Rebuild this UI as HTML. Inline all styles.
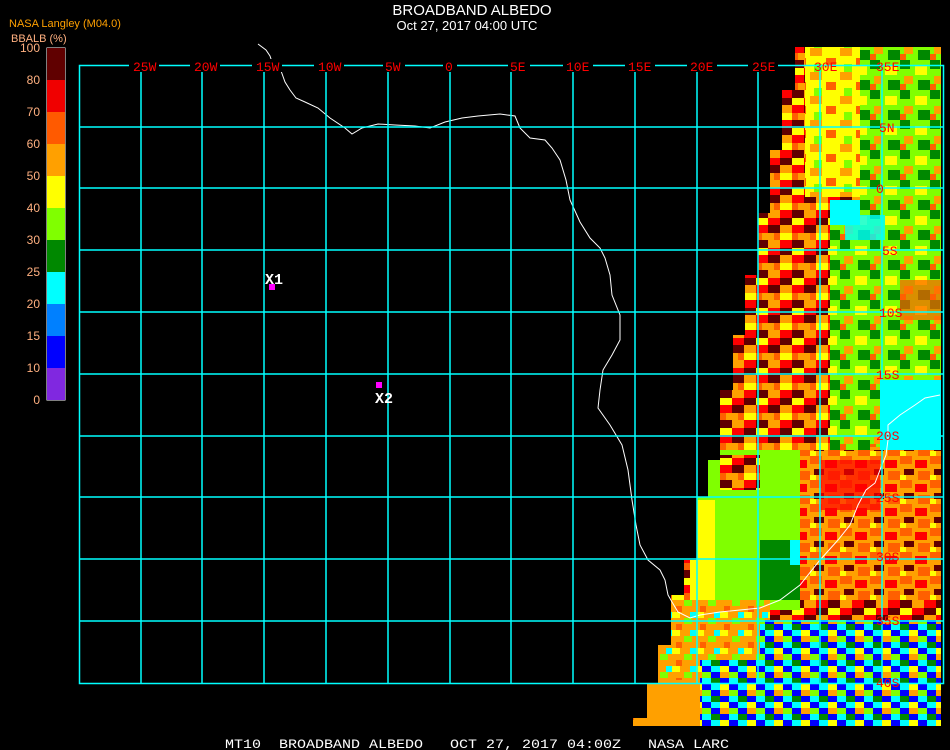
<!DOCTYPE html>
<html><head><meta charset="utf-8"><style>
html,body{margin:0;padding:0;background:#000;width:950px;height:750px;overflow:hidden}
svg{display:block}
text{font-family:"Liberation Sans",sans-serif}
.m{font-family:"Liberation Mono",monospace}
</style></head><body>
<svg width="950" height="750" viewBox="0 0 950 750" xmlns="http://www.w3.org/2000/svg">
<defs>
<pattern id="hot" width="36" height="30" patternUnits="userSpaceOnUse">
<rect width="36" height="30" fill="#ff6000"/>
<rect x="0" y="0" width="12" height="8" fill="#600000"/><rect x="12" y="0" width="12" height="8" fill="#ffa000"/><rect x="24" y="0" width="12" height="8" fill="#ff0000"/>
<rect x="0" y="8" width="12" height="7" fill="#ffff00"/><rect x="12" y="8" width="12" height="7" fill="#ff0000"/><rect x="24" y="8" width="12" height="7" fill="#600000"/>
<rect x="0" y="15" width="12" height="8" fill="#ff0000"/><rect x="12" y="15" width="12" height="8" fill="#600000"/><rect x="24" y="15" width="12" height="8" fill="#ffa000"/>
<rect x="6" y="23" width="12" height="7" fill="#ffa000"/><rect x="24" y="23" width="12" height="7" fill="#ffff00"/>
</pattern>
<pattern id="veg" width="30" height="30" patternUnits="userSpaceOnUse">
<rect width="30" height="30" fill="#80ff00"/>
<rect x="0" y="0" width="10" height="9" fill="#008800"/><rect x="15" y="6" width="12" height="9" fill="#ffff00"/>
<rect x="4" y="16" width="9" height="8" fill="#ffa000"/><rect x="18" y="20" width="12" height="10" fill="#008800"/>
<rect x="0" y="24" width="6" height="6" fill="#ff6000"/>
</pattern>
<pattern id="yel" width="30" height="24" patternUnits="userSpaceOnUse">
<rect width="30" height="24" fill="#ffff00"/>
<rect x="0" y="0" width="12" height="8" fill="#ffa000"/><rect x="16" y="10" width="10" height="8" fill="#ff6000"/>
<rect x="4" y="16" width="8" height="8" fill="#80ff00"/>
</pattern>
<pattern id="warm" width="30" height="24" patternUnits="userSpaceOnUse">
<rect width="30" height="24" fill="#ffa000"/>
<rect x="0" y="0" width="12" height="8" fill="#ff6000"/><rect x="15" y="4" width="12" height="8" fill="#ff0000"/>
<rect x="4" y="13" width="10" height="6" fill="#600000"/><rect x="18" y="15" width="12" height="9" fill="#ff6000"/>
<rect x="0" y="19" width="6" height="5" fill="#ffff00"/>
</pattern>
<pattern id="ocean" width="27" height="18" patternUnits="userSpaceOnUse">
<rect width="27" height="18" fill="#0080ff"/>
<rect x="0" y="0" width="9" height="6" fill="#0000ff"/><rect x="9" y="0" width="9" height="6" fill="#00ffff"/><rect x="18" y="0" width="9" height="6" fill="#ffff00"/>
<rect x="0" y="6" width="9" height="6" fill="#80ff00"/><rect x="9" y="6" width="9" height="6" fill="#0000ff"/><rect x="18" y="6" width="9" height="6" fill="#ffa000"/>
<rect x="0" y="12" width="9" height="6" fill="#00ffff"/><rect x="9" y="12" width="9" height="6" fill="#008800"/><rect x="18" y="12" width="9" height="6" fill="#0000ff"/>
</pattern>
<pattern id="sw" width="24" height="18" patternUnits="userSpaceOnUse">
<rect width="24" height="18" fill="#ffa000"/>
<rect x="0" y="0" width="8" height="6" fill="#ffff00"/><rect x="12" y="6" width="8" height="6" fill="#80ff00"/>
<rect x="4" y="12" width="6" height="6" fill="#ff6000"/><rect x="18" y="0" width="6" height="6" fill="#00ffff"/>
</pattern>
<clipPath id="dc"><polygon points="795,47 941,47 941,726 633,726 633,718 647,718 647,683 658,683 658,645 671,645 671,595 684,595 684,560 697,560 697,497 708,497 708,460 720,460 720,390 733,390 733,335 745,335 745,275 758,275 758,213 770,213 770,150 782,150 782,90 795,90"/></clipPath>
</defs>

<g clip-path="url(#dc)">
<rect x="630" y="40" width="320" height="700" fill="url(#hot)"/>
<rect x="805" y="47" width="60" height="150" fill="url(#yel)"/>
<rect x="860" y="47" width="90" height="400" fill="url(#veg)"/>
<rect x="830" y="200" width="40" height="250" fill="url(#veg)"/>
<rect x="830" y="200" width="30" height="25" fill="#00ffff"/>
<rect x="845" y="215" width="40" height="25" fill="#00ffff" opacity="0.8"/>
<rect x="880" y="380" width="63" height="70" fill="#00ffff"/>
<rect x="900" y="280" width="43" height="40" fill="#ff6000" opacity="0.7"/>
<rect x="690" y="450" width="110" height="160" fill="#80ff00"/>
<rect x="720" y="455" width="40" height="35" fill="url(#hot)"/>
<rect x="760" y="540" width="40" height="60" fill="#008800"/>
<rect x="790" y="540" width="25" height="25" fill="#00ffff"/>
<rect x="690" y="500" width="25" height="100" fill="#ffff00"/>
<rect x="800" y="450" width="143" height="150" fill="url(#warm)"/>
<rect x="820" y="460" width="60" height="50" fill="#ff0000" opacity="0.7"/>
<rect x="630" y="600" width="140" height="130" fill="url(#sw)"/>
<rect x="640" y="680" width="90" height="50" fill="#ffa000"/>
<rect x="700" y="620" width="243" height="110" fill="url(#ocean)"/>
<rect x="700" y="600" width="60" height="60" fill="url(#sw)"/>
</g>

<!-- coastline -->
<polyline fill="none" stroke="#fff" stroke-width="1" points="258,44 266,50 270,56 272,62 280,68 285,82 290,90 296,98 305,102 318,108 330,118 345,128 352,134 362,128 378,124 395,125 415,126 430,128 445,122 462,118 478,116 500,114 515,116 520,128 530,138 545,140 552,148 560,160 566,180 570,200 580,222 590,238 600,248 605,258 610,275 612,295 620,315 620,340 612,355 603,370 600,390 598,408 610,425 622,445 628,470 632,500 636,525 640,545 648,560 660,570 665,580 668,595 672,602 678,612 690,618 700,615 720,612 740,610 760,608 780,600 800,585 820,560 838,540 850,525 858,505 866,490 875,483 880,470 886,455 888,440 888,425 900,415 915,405 925,398 940,395"/>

<!-- grid -->
<g stroke="#00ffff" stroke-width="1.5" fill="none">
<rect x="79.5" y="65.5" width="864" height="618"/>
<path d="M141 65V684M202 65V684M264 65V684M326 65V684M388 65V684M450 65V684M511 65V684M573 65V684M635 65V684M697 65V684M758 65V684M820 65V684M882 65V684"/>
<path d="M79 127H944M79 188H944M79 250H944M79 312H944M79 374H944M79 436H944M79 497H944M79 559H944M79 621H944"/>
</g>

<!-- top labels -->
<g class="m" font-size="13" fill="#ff0000">
<g fill="#000"><rect x="129" y="59" width="30" height="13"/><rect x="190" y="59" width="30" height="13"/><rect x="252" y="59" width="30" height="13"/><rect x="314" y="59" width="30" height="13"/><rect x="383" y="59" width="22" height="13"/><rect x="443" y="59" width="14" height="13"/><rect x="508" y="59" width="22" height="13"/><rect x="563" y="59" width="30" height="13"/><rect x="625" y="59" width="30" height="13"/><rect x="687" y="59" width="30" height="13"/><rect x="748" y="59" width="30" height="13"/></g>
<text x="133" y="71" class="m">25W</text><text x="194" y="71" class="m">20W</text><text x="256" y="71" class="m">15W</text><text x="318" y="71" class="m">10W</text><text x="385" y="71" class="m">5W</text><text x="445" y="71" class="m">0</text><text x="510" y="71" class="m">5E</text><text x="566" y="71" class="m">10E</text><text x="628" y="71" class="m">15E</text><text x="690" y="71" class="m">20E</text><text x="752" y="71" class="m">25E</text><text x="814" y="71" class="m">30E</text><text x="876" y="71" class="m">35E</text>
<text x="879" y="132" class="m">5N</text><text x="876" y="193" class="m">0</text><text x="882" y="255" class="m">5S</text><text x="879" y="317" class="m">10S</text><text x="876" y="379" class="m">15S</text><text x="876" y="440" class="m">20S</text><text x="876" y="502" class="m">25S</text><text x="876" y="561" class="m">30S</text><text x="876" y="625" class="m">35S</text><text x="876" y="687" class="m">40S</text>
</g>

<!-- markers -->
<rect x="269" y="284" width="6" height="6" fill="#ff00ff"/>
<text x="265" y="284" font-size="15" fill="#fff" class="m" font-weight="bold">X1</text>
<rect x="376" y="382" width="6" height="6" fill="#ff00ff"/>
<text x="375" y="403" font-size="15" fill="#fff" class="m" font-weight="bold">X2</text>

<!-- title -->
<text x="472" y="15" font-size="15" fill="#fff" text-anchor="middle">BROADBAND ALBEDO</text>
<text x="467" y="30" font-size="13" fill="#fff" text-anchor="middle">Oct 27, 2017 04:00 UTC</text>

<!-- legend -->
<text x="9" y="27" font-size="11" fill="#ffa000">NASA Langley (M04.0)</text>
<text x="11" y="42" font-size="11" fill="#ffb080">BBALB (%)</text>
<rect x="46.5" y="47.5" width="19" height="353" fill="#fff"/>
<rect x="47" y="48" width="18" height="32" fill="#600000"/>
<rect x="47" y="80" width="18" height="32" fill="#f00000"/>
<rect x="47" y="112" width="18" height="32" fill="#ff5a00"/>
<rect x="47" y="144" width="18" height="32" fill="#ffa000"/>
<rect x="47" y="176" width="18" height="32" fill="#ffff00"/>
<rect x="47" y="208" width="18" height="32" fill="#80ff00"/>
<rect x="47" y="240" width="18" height="32" fill="#008800"/>
<rect x="47" y="272" width="18" height="32" fill="#00ffff"/>
<rect x="47" y="304" width="18" height="32" fill="#0080ff"/>
<rect x="47" y="336" width="18" height="32" fill="#0000ff"/>
<rect x="47" y="368" width="18" height="32" fill="#8028e0"/>
<g font-size="12" fill="#ffb080" text-anchor="end">
<text x="40" y="52">100</text><text x="40" y="84">80</text><text x="40" y="116">70</text><text x="40" y="148">60</text><text x="40" y="180">50</text><text x="40" y="212">40</text><text x="40" y="244">30</text><text x="40" y="276">25</text><text x="40" y="308">20</text><text x="40" y="340">15</text><text x="40" y="372">10</text><text x="40" y="404">0</text>
</g>

<!-- bottom -->
<text x="225" y="748" class="m" font-size="13" fill="#fff" textLength="504" lengthAdjust="spacingAndGlyphs" xml:space="preserve">MT10  BROADBAND ALBEDO   OCT 27, 2017 04:00Z   NASA LARC</text>
</svg>
</body></html>
